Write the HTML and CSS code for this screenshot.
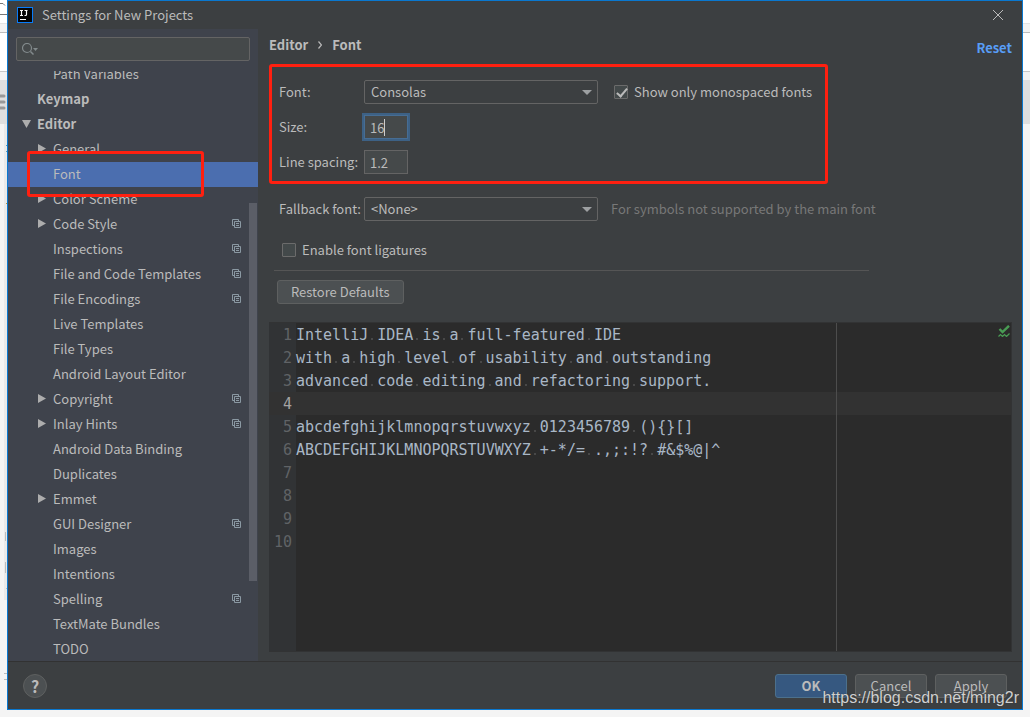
FILE: index.html
```html
<!DOCTYPE html>
<html lang="en">
<head>
<meta charset="utf-8">
<title>Settings for New Projects</title>
<link rel="stylesheet" href="styles.css">
</head>
<body>
<svg class="sprites" aria-hidden="true">
  <symbol id="copy" viewBox="0 0 9 9"><path d="M2 6.500H.5V.5H6.500V2M2.500 2.500H8.500V8.500H2.500ZM4 4.500H7M4 6.500H7" fill="none" stroke="#8b99a3"/></symbol>
  <symbol id="right" viewBox="0 0 8 9"><path d="M0 0L8 4.500L0 9Z" fill="#adadad"/></symbol>
  <symbol id="down" viewBox="0 0 9 8"><path d="M0 0H9L4.500 8Z" fill="#adadad"/></symbol>
</svg>
<svg class="backdrop-marks" aria-hidden="true" viewBox="0 0 7 717">
  <path d="M4 124H7V600H4Z" fill="#e9e9e9"/>
  <path d="M0 3.500H3L5 5.500M0 14.500H7" fill="none" stroke="#777"/>
  <path d="M0 96H4M0 102H4M0 108H4" stroke="#999" stroke-width="3" stroke-linecap="round"/>
  <path d="M6 145.500H7M6 151.500H7" stroke="#5a9bb0"/>
  <path d="M6 203.500H7" stroke="#c09030"/>
  <path d="M5.500 532V541M5.500 562V573M6 588.500H7M4 673.500H7M4 679.500H7" fill="none" stroke="#bbb"/>
</svg>
<div class="window">
  <header class="titlebar">
    <svg class="logo" viewBox="0 0 16 16" aria-hidden="true"><rect width="16" height="16" fill="#087cfa"/><rect x="1" y="1" width="14" height="14" fill="#060606"/><path d="M3 3.500H6M4.500 3.500V8.500M3 8.500H6M7.500 3.500H10.500M9.500 3V7.500Q9.500 8.500 8.500 8.500H7.500M3 12.500H9" fill="none" stroke="#fff" stroke-width="1.200"/></svg>
    <h1>Settings for New Projects</h1>
    <button class="close" aria-label="Close"><svg viewBox="0 0 10 10"><path d="M0 0L10 10M10 0L0 10" stroke="#bbb" fill="none"/></svg></button>
  </header>
  <div class="content">
    <nav class="sidebar">
      <div class="search">
        <svg viewBox="0 0 16 12" aria-hidden="true"><circle cx="5" cy="5" r="4.500" fill="none" stroke="#828a8c" stroke-width="1.200"/><path d="M8.500 8.500L11.500 11.500" stroke="#828a8c" stroke-width="1.500"/><path d="M11 5H16L13.500 8Z" fill="#828a8c"/></svg>
        <input type="text" aria-label="Search settings">
      </div>
      <div class="viewport">
        <ul class="tree">
          <li>Path Variables</li>
          <li class="top">Keymap</li>
          <li class="top"><svg class="open"><use href="#down"/></svg>Editor</li>
          <li><svg class="arrow"><use href="#right"/></svg>General</li>
          <li class="selected">Font</li>
          <li><svg class="arrow"><use href="#right"/></svg>Color Scheme</li>
          <li><svg class="arrow"><use href="#right"/></svg>Code Style<svg class="copy"><use href="#copy"/></svg></li>
          <li>Inspections<svg class="copy"><use href="#copy"/></svg></li>
          <li>File and Code Templates<svg class="copy"><use href="#copy"/></svg></li>
          <li>File Encodings<svg class="copy"><use href="#copy"/></svg></li>
          <li>Live Templates</li>
          <li>File Types</li>
          <li>Android Layout Editor</li>
          <li><svg class="arrow"><use href="#right"/></svg>Copyright<svg class="copy"><use href="#copy"/></svg></li>
          <li><svg class="arrow"><use href="#right"/></svg>Inlay Hints<svg class="copy"><use href="#copy"/></svg></li>
          <li>Android Data Binding</li>
          <li>Duplicates</li>
          <li><svg class="arrow"><use href="#right"/></svg>Emmet</li>
          <li>GUI Designer<svg class="copy"><use href="#copy"/></svg></li>
          <li>Images</li>
          <li>Intentions</li>
          <li>Spelling<svg class="copy"><use href="#copy"/></svg></li>
          <li>TextMate Bundles</li>
          <li>TODO</li>
        </ul>
        <div class="scrollbar"></div>
        <div class="mark mark-tree"></div>
      </div>
    </nav>
    <main class="panel">
      <div class="heading">
        <h2>Editor <svg viewBox="0 0 4 8" aria-hidden="true"><path d="M.5 .5L3.500 4L.5 7.500" fill="none" stroke="#bbb" stroke-width="1.200"/></svg> Font</h2>
        <a class="reset" href="#">Reset</a>
      </div>
      <form class="form">
        <div class="mark mark-form"></div>
        <label for="font">Font:</label>
        <div class="row">
          <div class="combo"><select id="font"><option>Consolas</option></select></div>
          <label class="check beside"><input type="checkbox" checked>Show only monospaced fonts</label>
        </div>
        <label for="size">Size:</label>
        <div class="row"><div class="number focused"><input id="size" type="text" value="16"><span class="caret"></span></div></div>
        <label for="spacing">Line spacing:</label>
        <div class="row"><div class="number"><input id="spacing" type="text" value="1.2"></div></div>
        <label class="fallback" for="fallback">Fallback font:</label>
        <div class="row fallback">
          <div class="combo"><select id="fallback"><option>&lt;None&gt;</option></select></div>
          <span class="hint">For symbols not supported by the main font</span>
        </div>
      </form>
      <label class="check ligatures"><input type="checkbox">Enable font ligatures</label>
      <hr>
      <button class="button restore">Restore Defaults</button>
      <div class="editor">
        <ol class="code">
          <li>IntelliJ<i> </i>IDEA<i> </i>is<i> </i>a<i> </i>full-featured<i> </i>IDE</li>
          <li>with<i> </i>a<i> </i>high<i> </i>level<i> </i>of<i> </i>usability<i> </i>and<i> </i>outstanding</li>
          <li>advanced<i> </i>code<i> </i>editing<i> </i>and<i> </i>refactoring<i> </i>support.</li>
          <li class="current"></li>
          <li>abcdefghijklmnopqrstuvwxyz<i> </i>0123456789<i> </i>(){}[]</li>
          <li>ABCDEFGHIJKLMNOPQRSTUVWXYZ<i> </i>+-*/=<i> </i>.,;:!?<i> </i>#&amp;$%@|^</li>
          <li></li>
          <li></li>
          <li></li>
          <li></li>
        </ol>
        <div class="margin-line"></div>
        <svg class="status" viewBox="0 0 12 12" aria-hidden="true"><path d="M1.500 4L4.500 7L11 .8" fill="none" stroke="#499c54" stroke-width="2.400"/><path d="M.5 11.500L2.500 9.500L4.500 11.500L6.500 9.500L8.500 11.500L11.500 8.500" fill="none" stroke="#499c54" stroke-width="1.200"/></svg>
      </div>
    </main>
  </div>
  <footer class="footer">
    <button class="help" aria-label="Help">?</button>
    <div class="actions">
      <button class="button primary">OK</button>
      <button class="button">Cancel</button>
      <button class="button"><u>A</u>pply</button>
    </div>
  </footer>
</div>
<div class="watermark">https://blog.csdn.net/ming2r</div>
</body>
</html>
```
FILE: styles.css
```css
* { box-sizing: border-box; }
body {
  margin: 0;
  height: 100vh;
  padding: 0 7px 7px;
  overflow: hidden;
  position: relative;
  color: #bbbbbb;
  font: 13px/20px "Noto Sans CJK SC", "Noto Sans", sans-serif;
  background: linear-gradient(#fff 23px, #e4e4e4 23px 24px, #f3f3f3 24px 32px, #bdbdbd 32px 33px, #fff 33px 71px, #c8c8c8 71px 72px, #f3f3f3 72px 80px, #dfdfdf 80px 124px, #f4f4f4 124px);
}
button, input, select { font: inherit; color: inherit; }
.sprites { position: absolute; width: 0; height: 0; }
.backdrop-marks { position: absolute; left: 0; top: 0; width: 7px; height: 717px; }
.window {
  height: 100%;
  display: flex;
  flex-direction: column;
  background: #3c3f41;
  border: 1px solid #0a78d0;
}
.titlebar { flex: none; height: 28px; display: flex; align-items: center; gap: 9px; padding: 0 19px 0 9px; }
.titlebar h1 { flex: 1; margin: 0; font-size: 13px; font-weight: 400; }
.logo { width: 16px; height: 16px; }
.close { width: 10px; height: 10px; padding: 0; border: 0; background: none; display: flex; }
.close svg { width: 10px; height: 10px; }
.content { flex: 1; min-height: 0; display: flex; }
.sidebar { flex: none; width: 250px; display: flex; flex-direction: column; background: #3f434c; }
.search {
  flex: none;
  height: 24px;
  margin: 8px 8px 10px;
  padding: 0 5px;
  display: flex;
  align-items: center;
  background: #45494a;
  border: 1px solid #646464;
  border-radius: 2px;
}
.search svg { flex: none; width: 16px; height: 12px; }
.search input { flex: 1; min-width: 0; border: 0; outline: 0; background: none; }
.viewport { flex: 1; min-height: 0; position: relative; overflow: hidden; }
.tree { list-style: none; margin: -9px 0 0; padding: 0; }
.tree li { height: 25px; display: flex; align-items: center; padding: 0 17px 2px 45px; }
.tree .top { padding-left: 29px; font-weight: 700; }
.tree .selected { background: #4b6eaf; }
.arrow { width: 8px; height: 9px; margin: 0 7px 0 -15px; }
.open { width: 9px; height: 8px; margin: 0 6px 0 -15px; }
.copy { width: 9px; height: 9px; margin-left: auto; }
.scrollbar { position: absolute; right: 1px; top: 132px; width: 8px; height: 378px; background: #5b5e67; }
.mark { position: absolute; border: 3px solid #ff2010; border-radius: 3px; pointer-events: none; }
.mark-tree { left: 19px; top: 80px; width: 177px; height: 46px; }
.panel { flex: 1; min-width: 0; display: flex; flex-direction: column; padding: 6px 10px 9px 11px; }
.heading { display: flex; justify-content: space-between; align-items: flex-start; height: 45px; }
.heading h2 { margin: 0; font-size: 13px; font-weight: 700; display: flex; align-items: center; gap: 10px; }
.heading h2 svg { width: 4px; height: 8px; }
.reset { margin-top: 3px; color: #589df6; font-weight: 700; text-decoration: none; }
.form { position: relative; display: grid; grid-template-columns: 75px 1fr; column-gap: 10px; row-gap: 11px; padding-left: 10px; align-items: center; }
.form > label { white-space: nowrap; }
.mark-form { left: 0; top: -16px; width: 559px; height: 120px; }
.row { display: flex; align-items: center; height: 24px; white-space: nowrap; }
.fallback { margin-top: 12px; }
.combo { position: relative; width: 234px; height: 24px; }
.combo::after { content: ""; position: absolute; right: 6px; top: 10px; border: 5px solid transparent; border-top-color: #9da0a2; border-bottom: 0; }
.combo select { display: block; width: 100%; height: 24px; padding: 0 6px; appearance: none; background: #3c3f41; border: 1px solid #646464; border-radius: 2px; }
.number { position: relative; width: 44px; height: 24px; }
.number input { display: block; width: 44px; height: 24px; padding: 0 5px; background: #45494a; border: 1px solid #646464; outline: 0; }
.focused input { border-color: #466d94; box-shadow: 0 0 0 2px #3d6185; }
.caret { position: absolute; left: 20px; top: 4px; width: 1px; height: 17px; background: #ccc; }
.hint { margin-left: 13px; color: #787878; }
.check { display: flex; align-items: center; gap: 6px; }
.check input { position: relative; appearance: none; width: 14px; height: 14px; margin: 0; background: #43494a; border: 1px solid #6b6b6b; border-radius: 1px; }
.check input:checked::after { content: ""; position: absolute; left: 4px; top: 0; width: 4px; height: 9px; border: solid #bbb; border-width: 0 2px 2px 0; transform: rotate(40deg); }
.beside { margin-left: 16px; }
.ligatures { margin: 19px 0 0 13px; align-self: flex-start; }
hr { width: 595px; max-width: 100%; height: 1px; margin: 10px 0 9px 5px; border: 0; background: #555; flex: none; }
.button { min-width: 72px; height: 24px; padding: 0 13px; line-height: 20px; background: #4c5052; border: 1px solid #5e6060; border-radius: 3px; }
.restore { align-self: flex-start; flex: none; margin-left: 8px; }
.editor { flex: 1; min-height: 0; margin-top: 18px; position: relative; overflow: hidden; border: 1px solid #323334; border-left: 0; background: linear-gradient(90deg, #313335 27px, #2b2b2b 27px); }
.code { list-style: none; counter-reset: line; margin: 0; padding: 0; font: 15px/24px "DejaVu Sans Mono", monospace; color: #a9b7c6; }
.code li { height: 23px; display: flex; white-space: pre; counter-increment: line; }
.code li::before { content: counter(line); width: 23px; margin-right: 4px; text-align: right; color: #606366; flex: none; }
.code .current { background: #323232; }
.code .current::before { color: #a4a3a3; }
.code i { display: inline-block; width: 9px; background: radial-gradient(circle at 4px 16px, #484848 1px, transparent 1px); }
.margin-line { position: absolute; left: 567px; top: 0; bottom: 0; width: 1px; background: #4d4d4d; }
.status { position: absolute; right: 1px; top: 2px; width: 12px; height: 12px; }
.footer { flex: none; height: 48px; display: flex; align-items: center; justify-content: space-between; padding: 0 15px; border-top: 1px solid #323232; }
.help { width: 24px; height: 24px; padding: 0; border: 1px solid #5e6060; border-radius: 50%; background: #4c5052; font-size: 16px; font-weight: 600; line-height: 20px; }
.actions { display: flex; gap: 8px; }
.primary { background: #365880; border-color: #4c708c; font-weight: 700; }
.watermark { position: absolute; right: 11px; bottom: 9px; font: 16px/20px "Liberation Sans", sans-serif; color: #d0d0d0; text-shadow: 0 0 1px #333; }
```
